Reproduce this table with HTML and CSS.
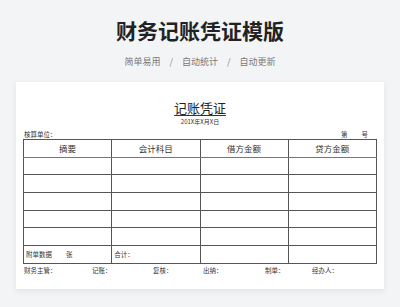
FILE: index.html
```html
<!DOCTYPE html>
<html lang="zh">
<head>
<meta charset="utf-8">
<title>财务记账凭证模版</title>
<link rel="stylesheet" href="styles.css">
</head>
<body>
<header class="hero">
  <h1 class="hero-title">财务记账凭证模版</h1>
  <p class="hero-sub"><span>简单易用</span><span class="sep">/</span><span>自动统计</span><span class="sep">/</span><span>自动更新</span></p>
</header>
<main class="card">
  <h2 class="doc-title">记账凭证</h2>
  <div class="doc-date">201X年X月X日</div>
  <div class="doc-meta">
    <span>核算单位：</span>
    <span class="doc-no"><span>第</span><span>号</span></span>
  </div>
  <table class="voucher">
    <thead>
      <tr><th>摘要</th><th>会计科目</th><th>借方金额</th><th>贷方金额</th></tr>
    </thead>
    <tbody>
      <tr><td></td><td></td><td></td><td></td></tr>
      <tr><td></td><td></td><td></td><td></td></tr>
      <tr><td></td><td></td><td></td><td></td></tr>
      <tr><td></td><td></td><td></td><td></td></tr>
      <tr><td></td><td></td><td></td><td></td></tr>
      <tr class="sum"><td><span class="att">附单数据</span><span>张</span></td><td>合计：</td><td></td><td></td></tr>
    </tbody>
  </table>
  <div class="signs">
    <span>财务主管：</span>
    <span>记账：</span>
    <span>复核：</span>
    <span>出纳：</span>
    <span>制单：</span>
    <span>经办人：</span>
  </div>
</main>
</body>
</html>
```

FILE: styles.css
```css
* { box-sizing: border-box; }
html, body { margin: 0; padding: 0; }
body {
  width: 400px;
  height: 307px;
  overflow: hidden;
  background: #f3f4f6;
  font-family: "Noto Sans CJK SC", "Noto Sans", sans-serif;
  color: #333;
}
.hero { padding-top: 19px; text-align: center; }
.hero-title {
  margin: 0;
  font-size: 21px;
  line-height: 22px;
  font-weight: 700;
  color: #222;
  letter-spacing: 0;
}
.hero-sub {
  margin: 15px 0 0;
  font-size: 9px;
  line-height: 12px;
  color: #777;
  display: flex;
  justify-content: center;
}
.hero-sub .sep { margin: 0 9px; color: #888; }
.card {
  margin: 14px 16px 0;
  height: 207px;
  background: #fff;
  box-shadow: 0 2px 6px rgba(0,0,0,0.08);
  padding: 19px 7px 0;
  font-family: "Noto Sans CJK SC", serif;
}
.doc-title {
  margin: 0 auto;
  width: max-content;
  font-size: 13px;
  line-height: 14px;
  font-weight: 400;
  color: #222;
  border-bottom: 1px solid #333;
}
.doc-date {
  margin-top: 2px;
  text-align: center;
  font-size: 6px;
  line-height: 8px;
  color: #333;
}
.doc-meta {
  margin-top: 4px;
  display: flex;
  justify-content: space-between;
  font-size: 6.5px;
  line-height: 9px;
  padding-left: 1px;
}
.doc-no { display: flex; gap: 14px; padding-right: 9px; }
.voucher {
  width: 100%;
  border-collapse: collapse;
  table-layout: fixed;
  margin-top: 0;
}
.voucher th, .voucher td {
  border: 1px solid #555;
  height: 17.7px;
  padding: 0;
  font-size: 8.5px;
  font-weight: 400;
  color: #333;
  text-align: center;
}
.voucher thead th { border-bottom-color: #777; }
.voucher .sum td {
  text-align: left;
  font-size: 6.5px;
  padding-left: 2px;
}
.voucher .sum .att { margin-right: 14px; }
.signs {
  margin-top: 2px;
  display: grid;
  grid-template-columns: 68px 61px 50px 62px 47px 1fr;
  font-size: 6.5px;
  line-height: 9px;
  padding-left: 1px;
  color: #333;
}
```
